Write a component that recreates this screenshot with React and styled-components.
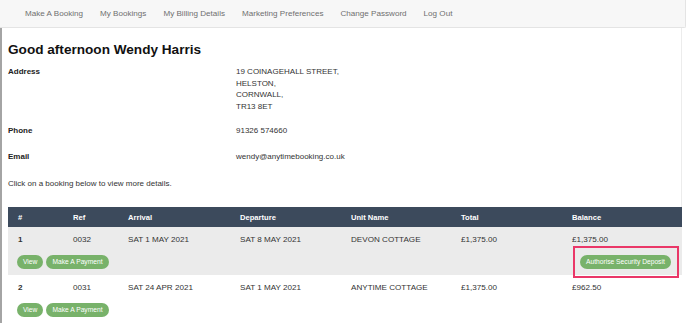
import React from "react";
import styled, { createGlobalStyle } from "styled-components";

const GlobalStyle = createGlobalStyle`
  html, body {
    margin: 0;
    padding: 0;
    background: #ffffff;
  }
  body {
    font-family: "Liberation Sans", Arial, Helvetica, sans-serif;
    color: #333333;
    font-size: 8px;
  }
`;

const Page = styled.div`
  width: 688px;
  height: 323px;
  overflow: hidden;
`;

const NavBar = styled.nav`
  width: 686px;
  height: 28px;
  box-sizing: border-box;
  background: #f7f7f7;
  border-bottom: 1px solid #e4e4e4;
  border-right: 1px solid #e4e4e4;
  border-bottom-right-radius: 2px;
  display: flex;
  align-items: center;
  padding-left: 25px;
  gap: 17px;
`;

const NavLink = styled.a`
  font-size: 8.1px;
  color: #6f6f6f;
  text-decoration: none;
  white-space: nowrap;
`;

const Content = styled.main`
  width: 682px;
  box-sizing: border-box;
  border-left: 2px solid #a4a4a4;
  border-right: 1px solid #ececec;
  padding: 0 0 40px 6px;
`;

const Heading = styled.h1`
  margin: 0;
  padding-top: 13px;
  font-size: 13.6px;
  line-height: 18px;
  font-weight: bold;
  color: #111111;
`;

const InfoRow = styled.div`
  display: grid;
  grid-template-columns: 228px 1fr;
  line-height: 11.5px;
  margin-top: ${(p) => p.$top}px;
`;

const Label = styled.div`
  font-weight: bold;
  color: #222222;
`;

const Value = styled.div`
  color: #333333;
`;

const Note = styled.p`
  margin: 15px 0 0;
  line-height: 11.5px;
`;

const Table = styled.table`
  margin-top: 18px;
  width: 674px;
  border-collapse: collapse;
  table-layout: fixed;
`;

const HeadRow = styled.tr`
  background: #3c4a5c;
  height: 20px;
`;

const Th = styled.th`
  text-align: left;
  color: #ffffff;
  font-weight: bold;
  font-size: 7.6px;
  padding: 0 10px;
`;

const DataRow = styled.tr`
  background: ${(p) => (p.$shade ? "#ebebeb" : "#ffffff")};
  height: 23px;
`;

const ActionRow = styled.tr`
  background: ${(p) => (p.$shade ? "#ebebeb" : "#ffffff")};
  height: 25px;
`;

const Td = styled.td`
  padding: 1px 10px 0;
  font-size: 8.1px;
  font-weight: ${(p) => (p.$bold ? "bold" : "normal")};
  color: #333333;
  white-space: nowrap;
  vertical-align: middle;
`;

const ActionCell = styled.td`
  padding: 0 0 2px ${(p) => p.$pad}px;
  vertical-align: middle;
  white-space: nowrap;
  line-height: 0;
`;

const Buttons = styled.div`
  display: flex;
  gap: 3px;
`;

const PillButton = styled.button`
  font-family: "Liberation Sans", Arial, sans-serif;
  font-size: 6.7px;
  line-height: 14px;
  height: 14px;
  padding: 0 6px;
  border: none;
  border-radius: 7px;
  background: #78b26a;
  color: #ffffff;
  cursor: pointer;
  white-space: nowrap;
`;

const Anchor = styled.span`
  position: relative;
  display: inline-block;
`;

const Highlight = styled.span`
  position: absolute;
  top: -9px;
  bottom: -9px;
  left: -7px;
  right: -8px;
  border: 2px solid #ea3768;
  pointer-events: none;
`;

const bookings = [
  {
    n: 1,
    ref: "0032",
    arrival: "SAT 1 MAY 2021",
    departure: "SAT 8 MAY 2021",
    unit: "DEVON COTTAGE",
    total: "£1,375.00",
    balance: "£1,375.00",
    deposit: true,
  },
  {
    n: 2,
    ref: "0031",
    arrival: "SAT 24 APR 2021",
    departure: "SAT 1 MAY 2021",
    unit: "ANYTIME COTTAGE",
    total: "£1,375.00",
    balance: "£962.50",
    deposit: false,
  },
];

const navItems = [
  "Make A Booking",
  "My Bookings",
  "My Billing Details",
  "Marketing Preferences",
  "Change Password",
  "Log Out",
];

export default function App() {
  return (
    <Page>
      <GlobalStyle />
      <NavBar>
        {navItems.map((item) => (
          <NavLink key={item} href="#">
            {item}
          </NavLink>
        ))}
      </NavBar>
      <Content>
        <Heading>Good afternoon Wendy Harris</Heading>
        <InfoRow $top={7}>
          <Label>Address</Label>
          <Value>
            19 COINAGEHALL STREET,
            <br />
            HELSTON,
            <br />
            CORNWALL,
            <br />
            TR13 8ET
          </Value>
        </InfoRow>
        <InfoRow $top={13}>
          <Label>Phone</Label>
          <Value>91326 574660</Value>
        </InfoRow>
        <InfoRow $top={14.5}>
          <Label>Email</Label>
          <Value>wendy@anytimebooking.co.uk</Value>
        </InfoRow>
        <Note>Click on a booking below to view more details.</Note>
        <Table>
          <colgroup>
            <col style={{ width: 55 }} />
            <col style={{ width: 55 }} />
            <col style={{ width: 112 }} />
            <col style={{ width: 111 }} />
            <col style={{ width: 110 }} />
            <col style={{ width: 111 }} />
            <col style={{ width: 120 }} />
          </colgroup>
          <thead>
            <HeadRow>
              <Th>#</Th>
              <Th>Ref</Th>
              <Th>Arrival</Th>
              <Th>Departure</Th>
              <Th>Unit Name</Th>
              <Th>Total</Th>
              <Th>Balance</Th>
            </HeadRow>
          </thead>
          <tbody>
            {bookings.map((b) => (
              <React.Fragment key={b.ref}>
                <DataRow $shade={b.deposit}>
                  <Td $bold>{b.n}</Td>
                  <Td>{b.ref}</Td>
                  <Td>{b.arrival}</Td>
                  <Td>{b.departure}</Td>
                  <Td>{b.unit}</Td>
                  <Td>{b.total}</Td>
                  <Td>{b.balance}</Td>
                </DataRow>
                <ActionRow $shade={b.deposit}>
                  <ActionCell colSpan={6} $pad={9}>
                    <Buttons>
                      <PillButton>View</PillButton>
                      <PillButton>Make A Payment</PillButton>
                    </Buttons>
                  </ActionCell>
                  <ActionCell $pad={18}>
                    {b.deposit && (
                      <Anchor>
                        <PillButton>Authorise Security Deposit</PillButton>
                        <Highlight />
                      </Anchor>
                    )}
                  </ActionCell>
                </ActionRow>
              </React.Fragment>
            ))}
          </tbody>
        </Table>
      </Content>
    </Page>
  );
}
